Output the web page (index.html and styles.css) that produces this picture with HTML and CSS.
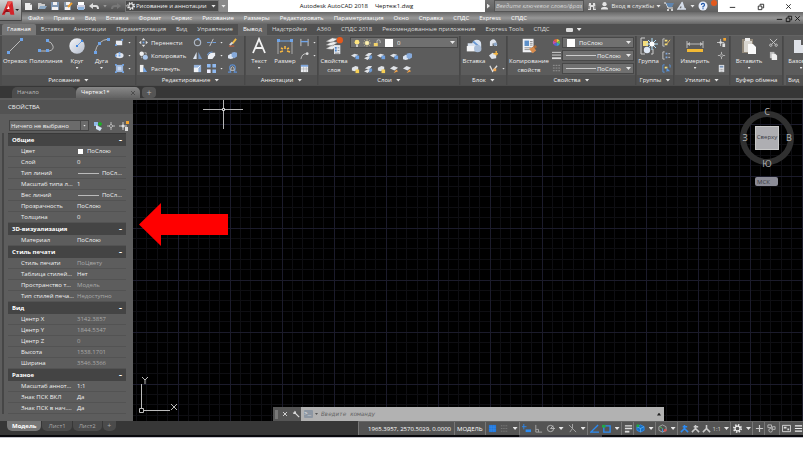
FILE: index.html
```html
<!DOCTYPE html>
<html lang="ru">
<head>
<meta charset="utf-8">
<title>Autodesk AutoCAD 2018 — Чертеж1.dwg</title>
<link rel="stylesheet" href="styles.css">
</head>
<body>
<svg class="defs" aria-hidden="true">
<defs>
<linearGradient id="disc" x1="0" y1="0" x2="1" y2="1"><stop offset="0" stop-color="#f4f6f9"/><stop offset="1" stop-color="#b4bccb"/></linearGradient>
<symbol id="new" viewBox="0 0 10 10"><path d="M1 2h5l2 2v5H1z" fill="#eee"/><path d="M6 2l2 2H6z" fill="#999"/></symbol>
<symbol id="open" viewBox="0 0 10 10"><path d="M1 2h3l1 1h3v2H4L2 8H1z" fill="#ccc"/><path d="M3 5h7L8 8H2z" fill="#8da9c4"/></symbol>
<symbol id="save" viewBox="0 0 10 10"><path d="M1 1h8v8H1z" fill="#7f97b3"/><path d="M3 1h4v3H3zM2 6h6v3H2z" fill="#f2f2f2"/></symbol>
<symbol id="saveas" viewBox="0 0 10 10"><path d="M1 1h7v8H1z" fill="#8a9aac"/><path d="M3 1h4v3H3zM2 6h5v3H2z" fill="#f2f2f2"/><path d="M5 6l4-4" stroke="#f0a030" stroke-width="2"/></symbol>
<symbol id="print" viewBox="0 0 10 10"><path d="M2 1h6v3H2z" fill="#fff"/><path d="M1 4h8v4H1z" fill="#ccd"/><path d="M2 6h6v3H2z" fill="#8cb4dd"/></symbol>
<symbol id="undo" viewBox="0 0 10 10"><path d="M3 5h4q2 0 2 3" fill="none" stroke="#ddd" stroke-width="2"/><path d="M0 5l4-3v6z" fill="#ddd"/></symbol>
<symbol id="redo" viewBox="0 0 10 10"><path d="M7 5H4Q1 5 1 8" fill="none" stroke="#777" stroke-width="2"/><path d="M10 5L6 2v6z" fill="#777"/></symbol>
<symbol id="gear" viewBox="0 0 10 10"><circle cx="5" cy="5" r="4" fill="none" stroke="#eee" stroke-width="2" stroke-dasharray="1.6 1.54"/><circle cx="5" cy="5" r="2.7" fill="none" stroke="#eee" stroke-width="1.3"/></symbol>
<symbol id="bino" viewBox="0 0 10 10"><path d="M2 2h2v2h2V2h2l1 7H6V6H4v3H1z" fill="#ddd"/><path d="M2 5v3M8 5v3" stroke="#555"/></symbol>
<symbol id="user" viewBox="0 0 10 10"><circle cx="5" cy="3" r="2.4" fill="#e4e4e4"/><path d="M1 9q0-3 3-3h2q3 0 3 3z" fill="#e4e4e4"/></symbol>
<symbol id="cart" viewBox="0 0 10 10"><path d="M0 2h2l2 5h5" fill="none" stroke="#eee"/><path d="M2 2h8L8 6H4z" fill="#5f84ad"/><circle cx="4" cy="9" r="1" fill="#eee"/><circle cx="8" cy="9" r="1" fill="#eee"/></symbol>
<symbol id="a360" viewBox="0 0 10 10"><path d="M5 1l2 6H5zM5 2L1 8h8" fill="none" stroke="#d4dce8" stroke-width="1.4"/></symbol>
<symbol id="help" viewBox="0 0 10 10"><circle cx="5" cy="5" r="4.5" fill="#e8eefa"/><path d="M3.500 4Q3.500 2.300 5 2.300T6.500 4Q6.500 5 5 5.500V6.500M5 7.200V8.300" fill="none" stroke="#1d55a8" stroke-width="1.200"/></symbol>
<symbol id="line" viewBox="0 0 18 18"><path d="M2 16L16 2" stroke="#bbb"/><path d="M1 14h3v3H1zM14 1h3v3h-3z" fill="#6fa4e8"/></symbol>
<symbol id="pline" viewBox="0 0 18 18"><path d="M3 14h9q5-1 4-5t-6-5H9" fill="none" stroke="#bbb"/><path d="M1 12h3v3H1zM9 12h3v3H9zM9 2h3v3H9z" fill="#6fa4e8"/></symbol>
<symbol id="circle" viewBox="0 0 18 18"><circle cx="9" cy="9" r="7.700" fill="url(#disc)"/><path d="M9 9l5-5" stroke="#6fa4e8"/><path d="M8 8h2v2H8zM13 3h2v2h-2z" fill="#3f86e0"/></symbol>
<symbol id="arc" viewBox="0 0 18 18"><path d="M2 16Q4 3 16 2" fill="none" stroke="#bbb"/><path d="M1 14h3v3H1zM5 5h3v3H5zM14 1h3v3h-3z" fill="#6fa4e8"/></symbol>
<symbol id="rect" viewBox="0 0 10 10"><path d="M1 3h7v5H1z" fill="#e7eaf0"/><path d="M7 1h2v2H7zM0 7h2v2H0z" fill="#6fa4e8"/></symbol>
<symbol id="ellipse" viewBox="0 0 10 10"><ellipse cx="5" cy="5" rx="4.500" ry="3" fill="#dfe4ed"/><path d="M4 4h2v2H4zM4 1h2v2H4zM0 4h2v2H0z" fill="#6fa4e8"/></symbol>
<symbol id="hatch" viewBox="0 0 10 10"><path d="M1 1h8v8H1z" fill="#9bb5da"/><path d="M3 3h4v4H3z" fill="#c9d8ee"/><path d="M0 0h2v2H0zM8 0h2v2H8zM0 8h2v2H0zM8 8h2v2H8z" fill="#6fa4e8"/></symbol>
<symbol id="move" viewBox="0 0 10 10"><path d="M5 0l2 2.500H3zM5 10L3 7.500h4zM0 5l2.500-2v4zM10 5L7.500 3v4z" fill="#ddd"/><path d="M4 4h2v2H4z" fill="#6fa4e8"/></symbol>
<symbol id="copy" viewBox="0 0 10 10"><circle cx="3" cy="3" r="2.500" fill="#eee"/><circle cx="7" cy="7" r="2.800" fill="#aac6ea"/><path d="M6 2h2v2M3 6v2" fill="none" stroke="#bbb"/></symbol>
<symbol id="stretch" viewBox="0 0 10 10"><path d="M1 1h4v8H1z" fill="#eee"/><path d="M5 3l4 6H5z" fill="#6fa4e8"/></symbol>
<symbol id="rotate" viewBox="0 0 10 10"><circle cx="5" cy="5" r="3.500" fill="none" stroke="#aeb7c4" stroke-width="1.300"/><path d="M4 0h3v3z" fill="#6fa4e8"/></symbol>
<symbol id="mirror" viewBox="0 0 10 10"><path d="M4 1v8H0z" fill="#dce4ef"/><path d="M6 1v8h4z" fill="#7697c4"/></symbol>
<symbol id="scale" viewBox="0 0 10 10"><path d="M1 1h8v8H1z" fill="#95b3dc"/><path d="M1 4h5v5H1z" fill="#f0f2f5"/><path d="M5 5l3-3" stroke="#fff"/></symbol>
<symbol id="trim" viewBox="0 0 10 10"><path d="M0 5h4M6 5h4" stroke="#6fa4e8"/><path d="M3 9l4-8" stroke="#ccc"/></symbol>
<symbol id="fillet" viewBox="0 0 10 10"><path d="M1 9V6q1-4 5-4h3v3L6 9z" fill="#eceff4"/><path d="M0 5q1-4 6-4" fill="none" stroke="#6fa4e8"/></symbol>
<symbol id="array" viewBox="0 0 10 10"><path d="M0 0h4v4H0zM6 0h4v4H6zM6 6h4v4H6z" fill="#8fb9f0"/><path d="M0 6h4v4H0z" fill="#eef"/></symbol>
<symbol id="erase" viewBox="0 0 10 10"><path d="M9 1L5 6" stroke="#f4bd45" stroke-width="2"/><path d="M5 5L2 8" stroke="#ddd" stroke-width="2"/><path d="M1 9h6" stroke="#d65f35"/></symbol>
<symbol id="explode" viewBox="0 0 10 10"><path d="M0 5l3-2 3 1v4L3 9 0 8z" fill="#dbe4f1"/><path d="M4 2l3-1 3 1v4L7 8 4 6z" fill="#86aadb"/></symbol>
<symbol id="offset" viewBox="0 0 10 10"><path d="M0 9h3Q0 1 5 1t2 8h3" fill="none" stroke="#5c8fd2" stroke-width="1.300"/><path d="M3 7q0-4 2-4t2 4z" fill="none" stroke="#ccc"/></symbol>
<symbol id="text" viewBox="0 0 18 18"><path d="M3 16L9 2l6 14M5 11h8" fill="none" stroke="#f2f2f2" stroke-width="1.800"/></symbol>
<symbol id="dim" viewBox="0 0 18 18"><path d="M2 4v13M16 4v13" stroke="#aaa"/><path d="M2 4h14" stroke="#6fa4e8"/><path d="M1 2h3v3H1zM14 2h3v3h-3z" fill="#6fa4e8"/><path d="M9 9v3M5 11l2 1M13 11l-2 1M4 15l3-1M14 15l-3-1" stroke="#f5b642" stroke-width="1.600"/></symbol>
<symbol id="dimline" viewBox="0 0 10 10"><path d="M1 1v8M9 1v8" stroke="#ccc"/><path d="M1 4h8" stroke="#6fa4e8" stroke-width="1.500"/></symbol>
<symbol id="leader" viewBox="0 0 10 10"><path d="M1 9Q2 3 7 3h2" fill="none" stroke="#ccc"/><circle cx="8" cy="3" r="1.500" fill="#ddd"/></symbol>
<symbol id="table" viewBox="0 0 10 10"><path d="M1 1h8v8H1z" fill="#eceef2"/><path d="M1 1h8v2H1z" fill="#7da5dc"/><path d="M1 5.500h8M4 3v6M7 3v6" stroke="#999" stroke-width=".5"/></symbol>
<symbol id="layers" viewBox="0 0 20 20"><path d="M1 5l7-4 6 1-6 4zM1 9l7-4 6 1-6 4zM1 13l7-4 6 1-6 4z" fill="#eee" stroke="#777" stroke-width=".5"/><path d="M10 9h7v10h-7z" fill="#e2e7ee"/><path d="M11 11h2v2h-2zM11 14h2v2h-2z" fill="#4a83c8"/><path d="M14 12h2M14 15h2M11 18h5" stroke="#888"/><circle cx="16.500" cy="3.500" r="3.500" fill="#e3591d"/></symbol>
<symbol id="bulb" viewBox="0 0 10 10"><circle cx="5" cy="4" r="3" fill="#ffe57e"/><path d="M4 7h2v3H4z" fill="#ddd"/></symbol>
<symbol id="sun" viewBox="0 0 10 10"><path d="M5 0v10M0 5h10M1.500 1.500l7 7M8.500 1.500l-7 7" stroke="#e8d9a0" stroke-width=".7"/><circle cx="5" cy="5" r="2.500" fill="#fff2b0"/></symbol>
<symbol id="lock" viewBox="0 0 10 10"><path d="M5 5V3q0-2 2-2t2 2v2" fill="none" stroke="#ccc"/><path d="M1 5h5v4H1z" fill="#f3d36a"/></symbol>
<symbol id="lay1" viewBox="0 0 10 10"><path d="M0 4l4-2 4 1-4 3z" fill="#dfe2e7"/><path d="M5 4h4v4H5z" fill="#6fa0e0"/></symbol>
<symbol id="lay2" viewBox="0 0 10 10"><path d="M1 4l4-3h4L6 5zM0 7l4-2h4L4 9z" fill="#dfe2e7"/><path d="M6 4h3v3L6 9z" fill="#6a98d2"/></symbol>
<symbol id="lay3" viewBox="0 0 10 10"><path d="M1 3l4-2 3 1v3L4 7 1 6z" fill="#dfe2e7"/><path d="M5 5h4v4H5z" fill="#f6cf54"/></symbol>
<symbol id="lay4" viewBox="0 0 10 10"><path d="M0 4l4-3 5 2-4 3z" fill="#dfe2e7"/><path d="M4 9l3-4 2 2z" fill="#f0a34b"/></symbol>
<symbol id="block" viewBox="0 0 20 18"><path d="M3 6h5q1-4 5-4 5 0 5 5v7H6L3 11z" fill="#d7e1ee"/><path d="M2 9h9v6H2z" fill="#f3f4f6"/><path d="M9 4l7 6" stroke="#6797d2" stroke-width="2"/><circle cx="14" cy="12" r="4" fill="#a9bdd7"/></symbol>
<symbol id="blk1" viewBox="0 0 10 10"><path d="M1 4q4-5 7 0l1 5H6V6H4v3H1z" fill="#dfe4ec"/><circle cx="7" cy="7" r="2" fill="#8fa9ca"/></symbol>
<symbol id="blk2" viewBox="0 0 10 10"><path d="M0 5l4-3 4 2v4L3 9z" fill="#dfe4ec"/><path d="M8 0v5M5 3h5" stroke="#f5b642" stroke-width="1.500"/></symbol>
<symbol id="blk3" viewBox="0 0 10 10"><path d="M1 2l3 6 5-6" fill="none" stroke="#ddd" stroke-width="1.500"/><path d="M5 5h3v3H5z" fill="#f0a34b"/></symbol>
<symbol id="match" viewBox="0 0 20 18"><path d="M3 1h12v15H3z" fill="#f0f1f4"/><path d="M5 3h5v6H5z" fill="#5c8fc9"/><path d="M11 4h3M11 6h3M11 8h3M5 11h8M5 13h6" stroke="#888"/><path d="M18 9l-4 3" stroke="#aa6a36" stroke-width="3"/><path d="M10 12l5-2 3 4-4 3z" fill="#d88c4d"/></symbol>
<symbol id="wheel" viewBox="0 0 10 10"><path d="M5 5V1a4 4 0 0 1 3.500 2z" fill="#f1cf3b"/><path d="M5 5l3.500-2a4 4 0 0 1 0 4z" fill="#65bd4c"/><path d="M5 5l3.500 2A4 4 0 0 1 5 9z" fill="#3b9edb"/><path d="M5 5v4a4 4 0 0 1-3.500-2z" fill="#5a5fd0"/><path d="M5 5L1.500 7a4 4 0 0 1 0-4z" fill="#c44db1"/><path d="M5 5L1.500 3A4 4 0 0 1 5 1z" fill="#ee5b3a"/></symbol>
<symbol id="weights" viewBox="0 0 10 10"><path d="M0 1.500h10M0 4.500h10" stroke="#ddd"/><path d="M0 8h10" stroke="#ddd" stroke-width="2"/></symbol>
<symbol id="types" viewBox="0 0 10 10"><path d="M1 1.500h8M1 4.500h8M1 7.500h8" stroke="#999" stroke-dasharray="2 1"/></symbol>
<symbol id="group" viewBox="0 0 18 18"><path d="M5 1H1v16h4M11 17h2V12" fill="none" stroke="#ccc"/><path d="M3 4h5v5H3z" fill="#f4de7b"/><circle cx="7" cy="13" r="3.200" fill="#dfe8f5"/><path d="M12 1v12M6 7h12M8 3l8 8M16 3l-8 8" stroke="#aee0fc"/><circle cx="12" cy="7" r="2.500" fill="#fff"/></symbol>
<symbol id="grp1" viewBox="0 0 10 10"><path d="M3 1H1v8h2" fill="none" stroke="#ccc"/><path d="M3 2h3v2H3zM3 6h3v2H3z" fill="#f4de7b"/><path d="M5 7l4-5" stroke="#f0c060"/></symbol>
<symbol id="grp2" viewBox="0 0 10 10"><path d="M3 1H1v8h2" fill="none" stroke="#ccc"/><path d="M4 2h2v2H4zM4 6h2v2H4z" fill="#7da5dc"/><path d="M7 3h2M7 7h2" stroke="#ccc"/></symbol>
<symbol id="grp3" viewBox="0 0 10 10"><path d="M3 1H1v8h2M8 1h1v3" fill="none" stroke="#5795e0"/><path d="M3 3h3v2H3z" fill="#f4de7b"/><path d="M5 4l4 4H6L5 9z" fill="#5795e0"/></symbol>
<symbol id="measure" viewBox="0 0 18 18"><path d="M1 4v7M17 4v7M1 7h16" stroke="#bbb"/><path d="M1 7l3-2v4zM17 7l-3-2v4z" fill="#bbb"/><path d="M1 12h16v3H1z" fill="#f2b934"/></symbol>
<symbol id="qsel" viewBox="0 0 10 10"><path d="M4 1v8M0 5h8" stroke="#ccc"/><circle cx="4" cy="5" r="1.500" fill="#ddd"/><path d="M7 0h3v3H7z" fill="#f3a531"/><path d="M6 6h3v4H6z" fill="#ddd"/></symbol>
<symbol id="cross" viewBox="0 0 10 10"><path d="M5 1v8M1 5h8" stroke="#bbb"/><path d="M5 3l2 2-2 2-2-2z" fill="#777" stroke="#ccc" stroke-width=".6"/></symbol>
<symbol id="calc" viewBox="0 0 10 10"><path d="M2 1h6v8H2z" fill="#e2e4e8"/><path d="M3 2h4v2H3z" fill="#7993b5"/><path d="M3 6h4M3 8h4" stroke="#999" stroke-dasharray="1 .5"/></symbol>
<symbol id="paste" viewBox="0 0 18 18"><path d="M2 2h11v14H2z" fill="#92897b"/><path d="M4 4h8v11H4z" fill="#d8d5cf"/><path d="M5 1h5v3H5z" fill="#eee"/><path d="M8 7h5l3 3v7H8z" fill="#fafafa"/></symbol>
<symbol id="cut" viewBox="0 0 10 10"><path d="M1 1l6 6M9 1L3 7" stroke="#ccc"/><circle cx="2" cy="8" r="1.300" fill="none" stroke="#ccc"/><circle cx="8" cy="8" r="1.300" fill="none" stroke="#ccc"/></symbol>
<symbol id="pages" viewBox="0 0 10 10"><path d="M1 1h5v7H1z" fill="#bbb"/><path d="M3 3h4l2 2v5H3z" fill="#eee"/></symbol>
<symbol id="base" viewBox="0 0 18 18"><path d="M2 3h7v5h8v8H2z" fill="#dfe2e8"/></symbol>
<symbol id="pick" viewBox="0 0 10 10"><path d="M1 1h4v4H1z" fill="#8fb7e8"/><path d="M3 4l6 3-2 3-4-2z" fill="#d5e5f7"/><path d="M7 1v4M5 3h4" stroke="#25a42c" stroke-width="2"/></symbol>
<symbol id="sgrid" viewBox="0 0 10 10"><path d="M1 1h8v8H1z" fill="#2275d8"/><path d="M3.500 1v8M6.500 1v8M1 3.500h8M1 6.500h8" stroke="#3f95f2" stroke-width=".5"/></symbol>
<symbol id="sdots" viewBox="0 0 10 10"><path d="M1 2h8M1 5h8M1 8h8" stroke="#888" stroke-dasharray="1 1"/></symbol>
<symbol id="sinfer" viewBox="0 0 10 10"><path d="M2 0v6M0 3h5" stroke="#2c8bf2"/><path d="M4 6h6v3H4z" fill="#2c8bf2"/></symbol>
<symbol id="sortho" viewBox="0 0 10 10"><path d="M2 1v8h7M2 6h3v3" fill="none" stroke="#aaa"/></symbol>
<symbol id="spolar" viewBox="0 0 10 10"><circle cx="5" cy="5" r="3.500" fill="none" stroke="#bbb"/><path d="M5 5h5M5 5l3-3" stroke="#bbb"/></symbol>
<symbol id="siso" viewBox="0 0 10 10"><path d="M1 1l8 8M5 5L2 9M5 0v5" stroke="#aaa"/></symbol>
<symbol id="strack" viewBox="0 0 10 10"><path d="M9 1L1 9h9" fill="none" stroke="#2c8bf2" stroke-width="1.500"/></symbol>
<symbol id="sosnap" viewBox="0 0 10 10"><path d="M2 2h7v7H2z" fill="none" stroke="#2c8bf2" stroke-width="1.500"/><path d="M0 1h4v3H0z" fill="#22a846"/></symbol>
<symbol id="slw" viewBox="0 0 10 10"><path d="M1 2h8M1 5h8" stroke="#ddd" stroke-width="1.500"/><path d="M1 8.500h5" stroke="#ddd" stroke-width="2"/></symbol>
<symbol id="s3d" viewBox="0 0 10 10"><path d="M1 3l4-2 4 2v4L5 9 1 7z" fill="#1770c2" stroke="#2c8bf2"/><path d="M1 3l4 2 4-2M5 5v4" stroke="#8acbff" stroke-width=".6" fill="none"/><circle cx="2" cy="2" r="1.700" fill="#22a846"/></symbol>
<symbol id="sucs" viewBox="0 0 10 10"><path d="M5 1l4 2v4L5 9 1 7V3z" fill="none" stroke="#aaa"/><path d="M5 5v4" stroke="#4292e8"/><path d="M5 5L2 3" stroke="#52c55a"/><circle cx="8" cy="7" r="1.500" fill="#d85151"/></symbol>
<symbol id="sann" viewBox="0 0 10 10"><path d="M5 1v4L1 9M5 5l4 4M3 3h5M4 5h2" fill="none" stroke="currentColor" stroke-width="1.700"/></symbol>
<symbol id="sann3" viewBox="0 0 10 10"><path d="M5 1v4L1 9M5 5l4 4" fill="none" stroke="currentColor" stroke-width="1.700"/></symbol>
<symbol id="splus" viewBox="0 0 10 10"><path d="M5 1v8M1 5h8" stroke="#ccc" stroke-width="1.300"/></symbol>
<symbol id="siso2" viewBox="0 0 10 10"><path d="M1 1h4v3H1zM6 3h3v3H6z" fill="none" stroke="#bbb"/><circle cx="4" cy="7" r="2" fill="none" stroke="#bbb"/></symbol>
<symbol id="sfull" viewBox="0 0 10 10"><path d="M.5 1.500h9v7h-9z" fill="none" stroke="#ddd"/><path d="M2 3h3v2H2zM6 5h2v2H6z" fill="#ddd"/></symbol>
<symbol id="smenu" viewBox="0 0 10 10"><path d="M1 2h8M1 5h8M1 8h8" stroke="#eee" stroke-width="1.300"/></symbol>
<symbol id="min" viewBox="0 0 10 10"><path d="M2 6h6" stroke="currentColor"/></symbol>
<symbol id="max" viewBox="0 0 10 10"><path d="M2.500 4.500h4v4h-4zM4.500 4V2.500h4v4H7" fill="none" stroke="currentColor"/></symbol>
<symbol id="close" viewBox="0 0 10 10"><path d="M2.500 2.500l5 5M7.500 2.500l-5 5" stroke="currentColor"/></symbol>
<symbol id="wrench" viewBox="0 0 10 10"><path d="M3 3l6 6" stroke="#ddd" stroke-width="1.500"/><path d="M3 1v2H1q0 2 2 2t2-2-2-2" fill="#ddd"/></symbol>
</defs>
</svg>

<div class="app">
  <header class="top">
    <button class="logo" aria-label="Меню приложения"><svg viewBox="0 0 22 20"><path d="M2 15L8 1h5l2 14h-4l-1-3H6l-1 3z" fill="#d32329"/><path d="M7 9l2-5 1 5z" fill="#fff"/><path d="M8 1h5L7 9z" fill="#f0564e"/><path d="M2 15l4-3 4 0-3-3z" fill="#8e1118"/><path d="M16 9h4l-2 2z" fill="#222"/></svg></button>
    <div class="titlebar">
      <div class="quick">
        <button aria-label="Создать"><svg class="i"><use href="#new"/></svg></button>
        <button aria-label="Открыть"><svg class="i"><use href="#open"/></svg></button>
        <button aria-label="Сохранить"><svg class="i"><use href="#save"/></svg></button>
        <button aria-label="Сохранить как"><svg class="i"><use href="#saveas"/></svg></button>
        <button aria-label="Печать"><svg class="i"><use href="#print"/></svg></button>
        <button aria-label="Отменить"><svg class="i"><use href="#undo"/></svg></button><i class="caret dim"></i>
        <button aria-label="Повторить"><svg class="i"><use href="#redo"/></svg></button><i class="caret dim"></i>
      </div>
      <div class="workspace"><svg class="i"><use href="#gear"/></svg><select aria-label="Рабочее пространство"><option>Рисование и аннотации</option></select><i class="caret"></i></div>
      <div class="quick-end"><i class="caret"></i></div>
      <div class="caption"><span>Autodesk AutoCAD 2018</span><span>Чертеж1.dwg</span></div>
      <div class="info">
        <i class="caret side"></i>
        <input type="text" aria-label="Поиск" placeholder="Введите ключевое слово/фразу">
        <button aria-label="Найти"><svg class="i"><use href="#bino"/></svg></button>
        <button class="login"><svg class="i"><use href="#user"/></svg>Вход в службы<i class="caret"></i></button>
        <button aria-label="Магазин"><svg class="i"><use href="#cart"/></svg></button>
        <button aria-label="A360"><svg class="i"><use href="#a360"/></svg></button><i class="caret"></i>
        <button class="helpbtn" aria-label="Справка"><svg class="i"><use href="#help"/></svg></button><i class="dot"></i>
      </div>
      <div class="winctl">
        <button aria-label="Свернуть"><svg class="i"><use href="#min"/></svg></button>
        <button aria-label="Восстановить"><svg class="i"><use href="#max"/></svg></button>
        <button aria-label="Закрыть"><svg class="i"><use href="#close"/></svg></button>
      </div>
    </div>
    <nav class="menubar">
      <a href="#">Файл</a><a href="#">Правка</a><a href="#">Вид</a><a href="#">Вставка</a><a href="#">Формат</a><a href="#">Сервис</a><a href="#">Рисование</a><a href="#">Размеры</a><a href="#">Редактировать</a><a href="#">Параметризация</a><a href="#">Окно</a><a href="#">Справка</a><a href="#">СПДС</a><a href="#">Express</a><a href="#">СПДС</a>
      <span class="docctl"><svg class="i"><use href="#min"/></svg><svg class="i"><use href="#max"/></svg><svg class="i"><use href="#close"/></svg></span>
    </nav>
  </header>

  <nav class="tabs">
    <a class="on" href="#">Главная</a><a href="#">Вставка</a><a href="#">Аннотации</a><a href="#">Параметризация</a><a href="#">Вид</a><a href="#">Управление</a><a class="hover" href="#">Вывод</a><a href="#">Надстройки</a><a href="#">A360</a><a href="#">СПДС 2018</a><a href="#">Рекомендованные приложения</a><a href="#">Express Tools</a><a href="#">СПДС</a>
    <span class="toggle"><b></b><i class="caret"></i></span>
  </nav>

  <div class="ribbon">
    <section class="panel draw">
      <div class="body">
        <button class="big"><svg><use href="#line"/></svg>Отрезок</button>
        <button class="big wide"><svg><use href="#pline"/></svg>Полилиния</button>
        <button class="big"><svg><use href="#circle"/></svg>Круг<i class="caret"></i></button>
        <button class="big slim"><svg><use href="#arc"/></svg>Дуга<i class="caret"></i></button>
        <div class="col">
          <button><svg class="i"><use href="#rect"/></svg><i class="caret"></i></button>
          <button><svg class="i"><use href="#ellipse"/></svg><i class="caret"></i></button>
          <button><svg class="i"><use href="#hatch"/></svg><i class="caret"></i></button>
        </div>
      </div>
      <h2>Рисование<i class="caret"></i></h2>
    </section>
    <section class="panel edit">
      <div class="body">
        <div class="col named">
          <button><svg class="i"><use href="#move"/></svg>Перенести</button>
          <button><svg class="i"><use href="#copy"/></svg>Копировать</button>
          <button><svg class="i"><use href="#stretch"/></svg>Растянуть</button>
        </div>
        <div class="col">
          <button><svg class="i"><use href="#rotate"/></svg></button>
          <button><svg class="i"><use href="#mirror"/></svg></button>
          <button><svg class="i"><use href="#scale"/></svg></button>
        </div>
        <div class="col">
          <button><svg class="i"><use href="#trim"/></svg><i class="caret"></i></button>
          <button><svg class="i"><use href="#fillet"/></svg><i class="caret"></i></button>
          <button><svg class="i"><use href="#array"/></svg><i class="caret"></i></button>
        </div>
        <div class="col">
          <button><svg class="i"><use href="#erase"/></svg></button>
          <button><svg class="i"><use href="#explode"/></svg></button>
          <button><svg class="i"><use href="#offset"/></svg></button>
        </div>
      </div>
      <h2>Редактирование<i class="caret"></i></h2>
    </section>
    <section class="panel anno">
      <div class="body">
        <button class="big"><svg><use href="#text"/></svg>Текст<i class="caret"></i></button>
        <button class="big"><svg><use href="#dim"/></svg>Размер</button>
        <div class="col">
          <button><svg class="i"><use href="#dimline"/></svg><i class="caret"></i></button>
          <button><svg class="i"><use href="#leader"/></svg><i class="caret"></i></button>
          <button><svg class="i"><use href="#table"/></svg></button>
        </div>
      </div>
      <h2>Аннотации<i class="caret"></i></h2>
    </section>
    <section class="panel lay">
      <div class="body">
        <button class="big mid"><svg><use href="#layers"/></svg>Свойства<br>слоя</button>
        <div class="stack">
          <div class="combo"><svg class="i"><use href="#bulb"/></svg><svg class="i"><use href="#sun"/></svg><svg class="i"><use href="#lock"/></svg><b class="swatch"></b><select aria-label="Слой"><option>0</option></select><i class="caret"></i></div>
          <div class="line">
            <button><svg class="i"><use href="#lay1"/></svg></button><button><svg class="i"><use href="#lay2"/></svg></button><button><svg class="i"><use href="#lay1"/></svg></button><button><svg class="i"><use href="#lay1"/></svg></button><button><svg class="i"><use href="#explode"/></svg></button>
          </div>
          <div class="line">
            <button><svg class="i"><use href="#lay3"/></svg></button><button><svg class="i"><use href="#lay2"/></svg></button><button><svg class="i"><use href="#lay3"/></svg></button><button><svg class="i"><use href="#lay4"/></svg></button><button><svg class="i"><use href="#lay4"/></svg></button>
          </div>
        </div>
      </div>
      <h2>Слои<i class="caret"></i></h2>
    </section>
    <section class="panel blk">
      <div class="body">
        <button class="big"><svg><use href="#block"/></svg>Вставка</button>
        <div class="col">
          <button><svg class="i"><use href="#blk1"/></svg></button>
          <button><svg class="i"><use href="#blk2"/></svg></button>
          <button><svg class="i"><use href="#blk3"/></svg><i class="caret"></i></button>
        </div>
      </div>
      <h2>Блок<i class="caret"></i></h2>
    </section>
    <section class="panel props">
      <div class="body">
        <button class="big max"><svg><use href="#match"/></svg>Копирование<br>свойств</button>
        <div class="col">
          <button><svg class="i"><use href="#wheel"/></svg></button>
          <button><svg class="i"><use href="#weights"/></svg></button>
          <button><svg class="i"><use href="#types"/></svg></button>
        </div>
        <div class="stack">
          <div class="combo"><b class="swatch"></b><select aria-label="Цвет объекта"><option>ПоСлою</option></select><i class="caret"></i></div>
          <div class="combo"><hr><select aria-label="Вес линий"><option>ПоСлою</option></select><i class="caret"></i></div>
          <div class="combo"><hr><select aria-label="Тип линий"><option>ПоСлою</option></select><i class="caret"></i></div>
        </div>
      </div>
      <h2>Свойства<i class="caret"></i></h2>
    </section>
    <section class="panel grp">
      <div class="body">
        <button class="big slim"><svg><use href="#group"/></svg>Группа</button>
        <div class="col">
          <button><svg class="i"><use href="#grp1"/></svg></button>
          <button><svg class="i"><use href="#grp2"/></svg></button>
          <button><svg class="i"><use href="#grp3"/></svg></button>
        </div>
      </div>
      <h2>Группы<i class="caret"></i></h2>
    </section>
    <section class="panel util">
      <div class="body">
        <button class="big max"><svg><use href="#measure"/></svg>Измерить<i class="caret"></i></button>
        <div class="col">
          <button><svg class="i"><use href="#qsel"/></svg></button>
          <button><svg class="i"><use href="#cross"/></svg></button>
          <button><svg class="i"><use href="#calc"/></svg></button>
        </div>
      </div>
      <h2>Утилиты<i class="caret"></i></h2>
    </section>
    <section class="panel clip">
      <div class="body">
        <button class="big wide"><svg><use href="#paste"/></svg>Вставить<i class="caret"></i></button>
        <div class="col">
          <button><svg class="i"><use href="#cut"/></svg></button>
          <button><svg class="i"><use href="#pages"/></svg></button>
        </div>
      </div>
      <h2>Буфер обмена</h2>
    </section>
    <section class="panel view">
      <div class="body"><button class="big mid"><svg><use href="#base"/></svg>Базовый<i class="caret"></i></button></div>
      <h2>Вид<i class="caret"></i></h2>
    </section>
  </div>

  <nav class="files">
    <a href="#">Начало</a><a class="on" href="#">Чертеж1*<svg class="i"><use href="#close"/></svg></a><button aria-label="Новый чертеж">+</button>
  </nav>

  <main class="work">
    <aside class="palette">
      <h3>СВОЙСТВА</h3>
      <div class="selrow">
        <div class="objsel"><select aria-label="Выбор объектов"><option>Ничего не выбрано</option></select><span><i class="caret"></i></span></div>
        <button aria-label="Переключить PICKADD"><svg class="i"><use href="#pick"/></svg></button>
        <button aria-label="Выбрать объекты"><svg class="i"><use href="#cross"/></svg></button>
        <button aria-label="Быстрый выбор"><svg class="i"><use href="#qsel"/></svg></button>
      </div>
      <div class="tables">
        <table>
          <colgroup><col class="name"><col></colgroup>
          <tbody>
          <tr><th colspan="2">Общие<b>–</b></th></tr>
          <tr><td>Цвет</td><td><b class="chip"></b>ПоСлою</td></tr>
          <tr><td>Слой</td><td>0</td></tr>
          <tr><td>Тип линий</td><td><b class="rule"></b>ПоСл…</td></tr>
          <tr><td>Масштаб типа л…</td><td>1</td></tr>
          <tr><td>Вес линий</td><td><b class="rule"></b>ПоСл…</td></tr>
          <tr><td>Прозрачность</td><td>ПоСлою</td></tr>
          <tr><td>Толщина</td><td>0</td></tr>
          <tr><th colspan="2">3D-визуализация<b>–</b></th></tr>
          <tr><td>Материал</td><td>ПоСлою</td></tr>
          <tr><th colspan="2">Стиль печати<b>–</b></th></tr>
          <tr><td>Стиль печати</td><td class="ro">ПоЦвету</td></tr>
          <tr><td>Таблица стилей…</td><td>Нет</td></tr>
          <tr><td>Пространство т…</td><td class="ro">Модель</td></tr>
          <tr><td>Тип стилей печа…</td><td class="ro">Недоступно</td></tr>
          <tr><th colspan="2">Вид<b>–</b></th></tr>
          <tr><td>Центр X</td><td class="ro">3142.3857</td></tr>
          <tr><td>Центр Y</td><td class="ro">1844.5347</td></tr>
          <tr><td>Центр Z</td><td class="ro">0</td></tr>
          <tr><td>Высота</td><td class="ro">1538.1701</td></tr>
          <tr><td>Ширина</td><td class="ro">3546.3366</td></tr>
          <tr><th colspan="2">Разное<b>–</b></th></tr>
          <tr><td>Масштаб аннот…</td><td>1:1</td></tr>
          <tr><td>Знак ПСК ВКЛ</td><td>Да</td></tr>
          <tr><td>Знак ПСК в нач.…</td><td>Да</td></tr>
          </tbody>
        </table>
      </div>
    </aside>
    <div class="canvas">
      <svg class="grid" aria-hidden="true">
        <defs><pattern id="g" x="45" y="24" width="52" height="52" patternUnits="userSpaceOnUse">
          <path d="M10.500 0v52M20.500 0v52M31.500 0v52M41.500 0v52M0 10.500h52M0 20.500h52M0 31.500h52M0 41.500h52" stroke="#0e0e12"/>
          <path d="M.5 0v52M0 .5h52" stroke="#1b1b2b"/>
        </pattern></defs>
        <rect width="100%" height="100%" fill="url(#g)"/>
      </svg>
      <svg class="cursor" viewBox="0 0 40 40"><path d="M0 9.500h19M22 9.500h18M20.500 0v8M20.500 11v18" stroke="#b5b5b5"/><path d="M19.500 8.500h2v2h-2z" fill="none" stroke="#ddd"/></svg>
      <svg class="arrow" viewBox="0 0 89 43"><path d="M0 21.500L22 0v11h67v21H22v11z" fill="#f00"/></svg>
      <svg class="ucs" viewBox="0 0 40 40"><path d="M3.500 7v24M6 33.500h26M1.500 31.500h4v4h-4zM4 0l3 3 3-3M7 3v4M33 27l6 6M39 27l-6 6" fill="none" stroke="#bbb"/></svg>
      <div class="cube">
        <span class="n">С</span><span class="w">З</span><span class="face">Сверху</span><span class="e">В</span><span class="s">Ю</span>
      </div>
      <button class="wcs">МСК</button>
      <div class="cmd">
        <div class="grip"><b></b><svg class="i"><use href="#close"/></svg><svg class="i"><use href="#wrench"/></svg></div>
        <span class="prompt">&gt;_</span><i class="caret"></i>
        <input aria-label="Команда" placeholder="Введите команду"><i class="up"></i>
      </div>
    </div>
  </main>

  <footer class="status">
    <nav class="layouts"><a class="on" href="#">Модель</a><a href="#">Лист1</a><a href="#">Лист2</a><button aria-label="Новый лист">+</button></nav>
    <div class="tools">
      <span class="coords">1965.3957, 2570.5029, 0.0000</span>
      <button class="model">МОДЕЛЬ</button>
      <div><svg class="i"><use href="#sgrid"/></svg><svg class="i"><use href="#sdots"/></svg><i class="caret"></i></div>
      <div><svg class="i"><use href="#sinfer"/></svg><svg class="i"><use href="#sortho"/></svg><svg class="i"><use href="#spolar"/></svg><i class="caret"></i><svg class="i"><use href="#siso"/></svg><i class="caret"></i></div>
      <div><svg class="i"><use href="#strack"/></svg><svg class="i"><use href="#sosnap"/></svg><i class="caret"></i></div>
      <div><svg class="i"><use href="#slw"/></svg></div>
      <div><svg class="i"><use href="#s3d"/></svg><i class="caret"></i></div>
      <div><svg class="i"><use href="#sucs"/></svg><i class="caret"></i></div>
      <div class="ann"><svg class="i blue"><use href="#sann"/></svg><svg class="i"><use href="#sann"/></svg><svg class="i"><use href="#sann3"/></svg><span>1:1</span><i class="caret"></i></div>
      <div><svg class="i"><use href="#gear"/></svg><i class="caret"></i></div>
      <div><svg class="i"><use href="#splus"/></svg></div>
      <div class="roomy"><svg class="i"><use href="#siso2"/></svg></div>
      <div><svg class="i"><use href="#sfull"/></svg><svg class="i"><use href="#smenu"/></svg></div>
    </div>
  </footer>
  <div class="edge"><b></b></div>
</div>
</body>
</html>
```

FILE: styles.css
```css
* { box-sizing: border-box; }
html, body { height: 100%; }
body { margin: 0; background: #fff; color: #f0f0f0; font: 6px/8px "Open Sans", "Noto Sans", sans-serif; overflow: hidden; }
button, input, select { font: inherit; color: inherit; background: none; border: 0; padding: 0; margin: 0; border-radius: 0; outline: 0; }
select { appearance: none; min-width: 0; }
a { color: inherit; text-decoration: none; }
h2, h3 { margin: 0; font: inherit; }
.defs { position: absolute; width: 0; height: 0; }
.i { width: 10px; height: 10px; flex: none; display: block; }
.caret { flex: none; width: 5px; height: 3px; background: #e8e8e8; clip-path: polygon(0 0, 100% 0, 50% 100%); }
.caret.dim { width: 4px; background: #999; }
.caret.side { height: 5px; width: 3px; clip-path: polygon(0 0, 100% 50%, 0 100%); margin-right: 1px; }

.app { height: 100%; display: flex; flex-direction: column; padding-bottom: 17px; }

.top { display: grid; grid-template: 12px 12px / 22px 1fr; background: #6b6b6b; }
.logo { grid-row: 1 / 3; height: 21px; background: linear-gradient(#d2d2d2, #858585); border-right: 1px solid #555; border-bottom: 1px solid #444; }
.logo svg { display: block; width: 21px; height: 20px; }
.titlebar { display: flex; background: #fff; }
.titlebar > div { display: flex; align-items: center; }
.quick { background: linear-gradient(#747474, #4f4f4f); gap: 3px; padding-left: 2px; width: 103px; }
.quick button { flex: none; }
.quick .caret { margin: 0 1px; }
.workspace { width: 94px; background: #4a4a4a; border: 1px solid #777; padding: 0 2px 0 1px; }
.workspace select { flex: 1; }
.workspace .i { width: 8px; height: 8px; margin-right: 1px; }
.quick-end { background: #8a8a8a; padding: 0 2px; }
.caption { flex: 1; justify-content: center; gap: 7px; color: #111; }
.info { background: linear-gradient(#777, #5e5e5e); gap: 3px; padding: 0 1px 0 2px; width: 233px; }
.info input { width: 94px; height: 12px; padding: 0 1px; background: #848484; border: 1px solid #555; font-style: italic; }
.info input::placeholder { color: #d4d4d4; opacity: 1; }
.login { display: flex; align-items: center; gap: 2px; flex: 1; white-space: nowrap; }
.login .i { width: 9px; }
.dot { width: 6px; height: 6px; border-radius: 50%; background: #e3591d; align-self: flex-start; flex: none; }
.winctl { width: 85px; justify-content: space-around; color: #222; }
.winctl .i { width: 9px; height: 9px; }
.menubar { display: flex; align-items: center; gap: 10px; padding-left: 6px; background: linear-gradient(#686868, #979797 50%, #666); color: #fff; }
.docctl { margin-left: auto; display: flex; color: #111; padding-right: 1px; }
.docctl .i { width: 9px; height: 9px; }

.tabs { display: flex; height: 11px; align-items: stretch; background: #505050; color: #dcdcdc; padding-left: 2px; line-height: 11px; }
.tabs a { padding: 0 5px; white-space: nowrap; }
.tabs .on { background: #777; border-radius: 2px 2px 0 0; color: #fff; }
.tabs .hover { background: #636363; color: #fff; }
.toggle { display: flex; align-items: center; gap: 4px; padding-left: 11px; }
.toggle b { width: 7px; height: 4px; background: #ddd; border-radius: 1px; }

.ribbon { display: flex; height: 51px; background: #4d4d4d; padding: 0 0 1px 2px; gap: 1px; overflow: hidden; border-top: 1px solid #636363; }
.panel { flex: none; display: flex; flex-direction: column; background: #5c5c5c; border-right: 1px solid #484848; }
.panel h2 { height: 10px; line-height: 9px; background: #515151; display: flex; align-items: center; justify-content: center; gap: 4px; white-space: nowrap; }
.panel .body { flex: 1; display: flex; }
.panel button { white-space: nowrap; }
.draw { width: 134px; } .edit { width: 108px; } .anno { width: 72px; } .lay { width: 141px; } .blk { width: 46px; }
.props { width: 128px; } .grp { width: 37px; } .util { width: 55px; } .clip { width: 52px; } .view { width: 48px; padding-left: 2px; }
.view h2 { justify-content: flex-start; padding-left: 2px; }
.big { display: flex; flex-direction: column; align-items: center; width: 26px; flex: none; padding-top: 1px; line-height: 9px; }
.big svg { width: 18px; height: 18px; margin-bottom: 2px; flex: none; }
.big .caret, .col .caret { width: 3px; height: 2px; }
.big .caret { margin-top: 1px; }
.big.wide { width: 36px; } .big.slim { width: 23px; } .big.mid { width: 30px; } .big.max { width: 42px; }
.col { display: flex; flex-direction: column; }
.col button { display: flex; align-items: center; height: 13px; gap: 4px; padding-left: 2px; }
.col .i, .line .i { width: 9px; height: 9px; }
.named { width: 54px; }
.named button { gap: 3px; }
.edit .col + .col button { padding-right: 3px; }
.util .big.max { width: 40px; }
.stack { flex: 1; display: flex; flex-direction: column; padding: 1px 1px 0 1px; gap: 2px; }
.combo { display: flex; align-items: center; height: 11px; background: #707070; border: 1px solid #484848; padding: 0 2px; }
.combo .i { width: 8px; height: 8px; margin-right: 2px; }
.combo select { flex: 1; }
.combo hr { width: 30px; margin: 0 1px; border: 0; border-top: 1px solid #ccc; }
.swatch { width: 8px; height: 8px; background: #fff; margin: 0 4px 0 2px; }
.lay .stack { gap: 3px; }
.line { display: flex; gap: 4px; height: 10px; padding-left: 1px; }

.files { display: flex; height: 14px; padding: 1px 0 0 12px; background: #373737; border-bottom: 2px solid #5c5c5c; line-height: 11px; color: #bbb; }
.files a { display: flex; align-items: center; justify-content: space-between; width: 64px; padding: 0 3px 0 5px; background: #4c4c4c; border-radius: 5px 5px 0 0; }
.files .on { background: linear-gradient(#888, #626262); color: #fff; }
.files .i { width: 8px; height: 8px; color: #444; }
.files button { width: 14px; background: #555; border-radius: 4px; margin-left: 2px; font-size: 9px; }

.work { flex: 1; display: flex; min-height: 0; }
.palette { width: 133px; flex: none; background: #5d5d5d; overflow: hidden; }
.palette h3 { height: 14px; line-height: 14px; padding-left: 8px; background: #535353; }
.selrow { display: flex; gap: 3px; align-items: center; padding: 6px 4px 2px 9px; height: 19px; }
.objsel { display: flex; width: 80px; height: 11px; border: 1px solid #444; background: #6b6b6b; margin-right: 1px; }
.objsel select { flex: 1; padding-left: 1px; }
.objsel span { width: 8px; border-left: 1px solid #484848; display: flex; align-items: center; justify-content: center; }
.objsel .caret { width: 3px; height: 2px; }
.tables { border-left: 2px solid #464646; margin-left: 2px; padding-left: 4px; }
table { width: 118px; border-collapse: collapse; table-layout: fixed; }
.name { width: 67px; }
tr { height: 11px; }
td, th { padding: 0; height: 11px; line-height: 10px; font-weight: 400; text-align: left; white-space: nowrap; }
th { height: 12px; background: #444; color: #fff; font-weight: 700; padding: 0 4px; border-top: 1px solid #393939; }
th b { float: right; }
td { border-bottom: 1px solid #535353; padding-left: 2px; }
td:first-child { padding-left: 13px; }
.ro { color: #aaa; }
.chip, .rule { display: inline-block; background: #fff; vertical-align: middle; }
.chip { width: 5px; height: 5px; margin: 0 4px 0 1px; }
.rule { width: 21px; height: 1px; margin: 0 3px 0 1px; background: #bbb; }

.canvas { position: relative; flex: 1; background: #000; overflow: hidden; }
.grid { position: absolute; width: 100%; height: 100%; }
.cursor { position: absolute; left: 70px; top: 0; width: 40px; height: 40px; }
.arrow { position: absolute; left: 6px; top: 103px; width: 89px; height: 43px; }
.ucs { position: absolute; left: 5px; bottom: 4px; width: 40px; height: 40px; }
.cube { position: absolute; right: 7px; top: 6px; width: 58px; height: 64px; display: grid; grid-template: 12px 1fr 12px / 14px 1fr 14px; place-items: center; font-size: 9px; line-height: 10px; color: #b5b5b5; }
.cube::before { content: ""; position: absolute; inset: 5px 2px; border: 6px solid #303030; border-radius: 50%; }
.cube span { position: relative; }
.cube .n, .cube .s { grid-column: 1 / 4; }
.cube .face { width: 24px; height: 24px; line-height: 21px; text-align: center; background: #aeaeb2; border: 1px solid #c8c8c8; color: #3a3a42; font-size: 6px; }
.wcs { position: absolute; right: 25px; top: 77px; width: 23px; height: 9px; background: #8b8b96; border-radius: 2px; color: #3a3a42; text-align: left; padding-left: 2px; }
.cmd { position: absolute; left: 140px; right: 139px; bottom: 0; height: 14px; display: flex; align-items: center; background: #b2b2b2; color: #555; }
.grip { display: flex; align-items: center; gap: 3px; width: 28px; height: 14px; background: #555; color: #eee; padding-left: 2px; margin-right: 3px; }
.grip b { width: 3px; height: 9px; background: #777; }
.grip .i { width: 8px; height: 8px; }
.prompt { width: 9px; height: 8px; line-height: 7px; background: #8d97a3; color: #eee; font-family: "Liberation Mono", monospace; border-radius: 1px; }
.cmd .caret { width: 3px; height: 2px; margin: 0 3px 0 2px; background: #555; }
.cmd input { flex: 1; font: italic 6px/8px "DejaVu Sans Mono", monospace; }
.cmd input::placeholder { color: #666; opacity: 1; }
.up { width: 4px; height: 3px; margin-right: 3px; background: #222; clip-path: polygon(50% 0, 100% 100%, 0 100%); }

.status { display: flex; height: 14px; background: #373737; }
.layouts { display: flex; padding-left: 7px; height: 10px; line-height: 10px; color: #aaa; gap: 1px; }
.layouts a { background: #4b4b4b; border-radius: 0 0 5px 5px; padding: 0 6px; }
.layouts .on { background: #777; color: #fff; font-weight: 700; padding: 0 5px; }
.layouts button { width: 13px; background: #4b4b4b; border-radius: 0 0 5px 5px; font-size: 7px; }
.tools { margin-left: auto; display: flex; background: #545454; border-top: 1px solid #666; color: #fff; }
.tools > * { display: flex; align-items: center; gap: 3px; padding-left: 2px; border-left: 1px solid #777; }
.tools .i { width: 9px; height: 9px; }
.tools .caret { margin: 0 1px; }
.tools .coords { width: 96px; justify-content: flex-end; padding-right: 3px; }
.tools .model { padding-right: 2px; }
.tools .roomy { padding-right: 3px; }
.tools .ann { color: #ccc; gap: 2px; }
.tools .blue { color: #2c8bf2; }
.edge { height: 3px; background: #08080c; border-bottom: 1px solid #c4c4cc; display: flex; justify-content: center; }
.edge b { width: 83px; margin-left: 317px; background: #3b3b42; }
```
